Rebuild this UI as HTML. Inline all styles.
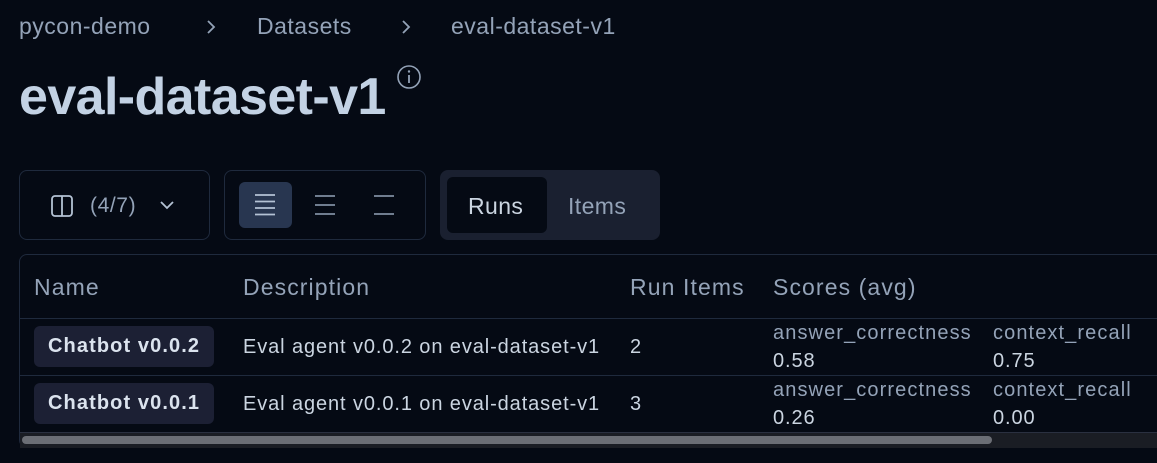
<!DOCTYPE html>
<html><head><style>
*{margin:0;padding:0;box-sizing:border-box}
body{width:1157px;height:463px;background:#050a14;font-family:"Liberation Sans",sans-serif;color:#cbd5e1;position:relative;overflow:hidden}
.a{position:absolute;white-space:nowrap}
.bc{font-size:23px;letter-spacing:0.5px;color:#94a3b8;top:13px}
.box{position:absolute;border:1px solid #1f2a3d;border-radius:8px}
.th{font-size:23px;letter-spacing:1.1px;color:#94a3b8;top:274px}
.td{font-size:20px;letter-spacing:0.9px;color:#cbd5e1}
.sm{font-size:20px;letter-spacing:1.1px;color:#94a3b8}
.badge{position:absolute;left:34px;height:41px;background:#1c2034;border-radius:6px;font-weight:bold;font-size:20px;letter-spacing:1.1px;color:#dbe3ee;padding:0 14px;line-height:41px}
.hl{position:absolute;left:20px;right:0;height:1px;background:#1f2a3d}
</style></head><body>
<div class="a bc" style="left:19px">pycon-demo</div>
<svg class="a" style="left:204px;top:18px" width="14" height="18" viewBox="0 0 14 18"><path d="M4 3l6 6-6 6" fill="none" stroke="#94a3b8" stroke-width="1.8"/></svg>
<div class="a bc" style="left:257px">Datasets</div>
<svg class="a" style="left:399px;top:18px" width="14" height="18" viewBox="0 0 14 18"><path d="M4 3l6 6-6 6" fill="none" stroke="#94a3b8" stroke-width="1.8"/></svg>
<div class="a bc" style="left:451px">eval-dataset-v1</div>
<div class="a" style="left:19px;top:67px;font-size:52px;font-weight:bold;letter-spacing:-0.6px;color:#c3d2e4">eval-dataset-v1</div>
<svg class="a" style="left:396px;top:64px" width="26" height="26" viewBox="0 0 26 26"><circle cx="13" cy="13" r="11" fill="none" stroke="#94a3b8" stroke-width="1.6"/><line x1="13" y1="11" x2="13" y2="19" stroke="#94a3b8" stroke-width="1.8"/><circle cx="13" cy="7.5" r="1.2" fill="#94a3b8"/></svg>

<div class="box" style="left:19px;top:170px;width:191px;height:70px"></div>
<svg class="a" style="left:50px;top:194px" width="24" height="24" viewBox="0 0 24 24"><rect x="2" y="2" width="20" height="20" rx="3" fill="none" stroke="#b4c2d4" stroke-width="1.8"/><line x1="12" y1="2" x2="12" y2="22" stroke="#b4c2d4" stroke-width="1.8"/></svg>
<div class="a" style="left:90px;top:194px;font-size:21px;letter-spacing:0.6px;color:#94a3b8">(4/7)</div>
<svg class="a" style="left:158px;top:198px" width="18" height="14" viewBox="0 0 18 14"><path d="M3 4l6 6 6-6" fill="none" stroke="#b4c2d4" stroke-width="1.8"/></svg>

<div class="box" style="left:224px;top:170px;width:202px;height:70px"></div>
<div class="a" style="left:239px;top:182px;width:53px;height:46px;background:#283650;border-radius:6px"></div>
<svg class="a" style="left:254px;top:193px" width="22" height="24" viewBox="0 0 22 24"><g stroke="#b4c2d4" stroke-width="1.8"><line x1="1" y1="2" x2="21" y2="2"/><line x1="1" y1="8.5" x2="21" y2="8.5"/><line x1="1" y1="15" x2="21" y2="15"/><line x1="1" y1="21.5" x2="21" y2="21.5"/></g></svg>
<svg class="a" style="left:314px;top:193px" width="22" height="24" viewBox="0 0 22 24"><g stroke="#94a3b8" stroke-width="1.6"><line x1="1" y1="3" x2="21" y2="3"/><line x1="1" y1="12" x2="21" y2="12"/><line x1="1" y1="21" x2="21" y2="21"/></g></svg>
<svg class="a" style="left:373px;top:193px" width="22" height="24" viewBox="0 0 22 24"><g stroke="#94a3b8" stroke-width="1.6"><line x1="1" y1="3" x2="21" y2="3"/><line x1="1" y1="21" x2="21" y2="21"/></g></svg>

<div class="a" style="left:440px;top:170px;width:220px;height:70px;background:#1a2030;border-radius:8px"></div>
<div class="a" style="left:447px;top:177px;width:100px;height:56px;background:#050a14;border-radius:6px"></div>
<div class="a" style="left:468px;top:193px;font-size:23px;letter-spacing:0.4px;color:#cbd5e1">Runs</div>
<div class="a" style="left:568px;top:193px;font-size:23px;letter-spacing:0.4px;color:#94a3b8">Items</div>

<div class="box" style="left:19px;top:254px;width:1160px;height:194px;border-radius:8px 0 0 8px"></div>
<div class="a th" style="left:34px">Name</div>
<div class="a th" style="left:243px">Description</div>
<div class="a th" style="left:630px">Run Items</div>
<div class="a th" style="left:773px">Scores (avg)</div>
<div class="hl" style="top:318px"></div>
<div class="badge" style="top:326px">Chatbot v0.0.2</div>
<div class="a td" style="left:243px;top:336px">Eval agent v0.0.2 on eval-dataset-v1</div>
<div class="a td" style="left:630px;top:336px">2</div>
<div class="a sm" style="left:773px;top:322px">answer_correctness</div>
<div class="a td" style="left:773px;top:350px">0.58</div>
<div class="a sm" style="left:993px;top:322px">context_recall</div>
<div class="a td" style="left:993px;top:350px">0.75</div>
<div class="hl" style="top:375px"></div>
<div class="badge" style="top:383px">Chatbot v0.0.1</div>
<div class="a td" style="left:243px;top:393px">Eval agent v0.0.1 on eval-dataset-v1</div>
<div class="a td" style="left:630px;top:393px">3</div>
<div class="a sm" style="left:773px;top:379px">answer_correctness</div>
<div class="a td" style="left:773px;top:407px">0.26</div>
<div class="a sm" style="left:993px;top:379px">context_recall</div>
<div class="a td" style="left:993px;top:407px">0.00</div>
<div class="a" style="left:20px;top:432px;width:1137px;height:16px;background:#1a1d24;border-top:1px solid #2a3040"></div>
<div class="a" style="left:22px;top:436px;width:970px;height:8px;background:#6b6e75;border-radius:4px"></div>
</body></html>
